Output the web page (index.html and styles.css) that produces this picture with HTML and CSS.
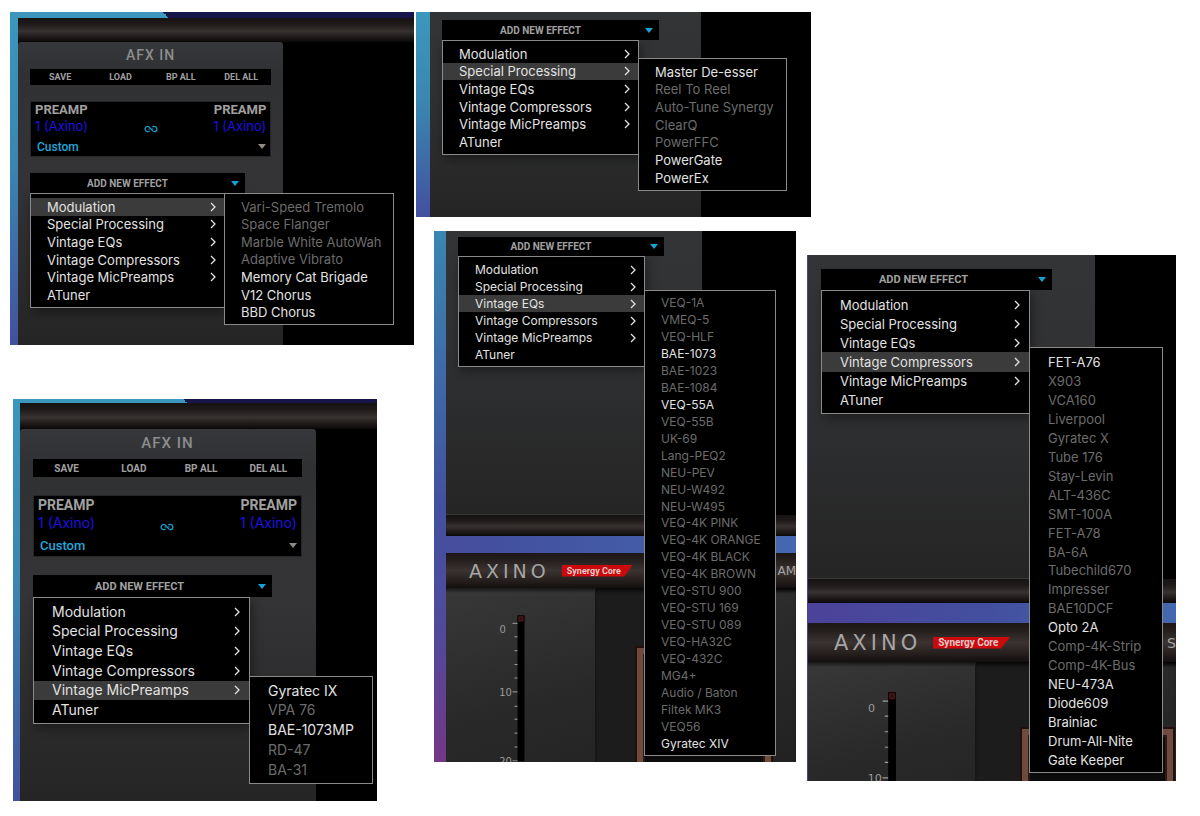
FILE: index.html
```
<!DOCTYPE html>
<html lang="en">
<head>
    <meta charset="UTF-8">
    <meta name="viewport" content="width=device-width, initial-scale=1.0">
    <title>AFX Effects Menu</title>
    <link rel="stylesheet" href="styles.css">
</head>
<body>
    <svg class="defs" width="0" height="0">
        <symbol id="chev" viewBox="0 0 6 10"><path d="M1 1l4 4-4 4" fill="none" stroke="currentColor" stroke-width="1.3"/></symbol>
        <symbol id="arrow" viewBox="0 0 8 5"><path d="M0 0h8L4 5z" fill="currentColor"/></symbol>
        <symbol id="link" viewBox="0 0 14 8">
            <path d="M5.600 5.900C5.200 6.500 4.600 6.700 3.800 6.700a2.700 2.700 0 0 1 0-5.400C6.500 1.300 7.500 6.700 10.200 6.700a2.700 2.700 0 0 0 0-5.400C9.400 1.300 8.800 1.500 8.400 2.100" fill="none" stroke="currentColor" stroke-width="1.300"/>
            <path d="M4.500 4h2M7.500 4h2" stroke="currentColor" stroke-width="1"/>
        </symbol>
        <symbol id="meter" viewBox="0 0 150 174">
            <rect x="72" y="27" width="7" height="147" fill="#000"/>
            <rect x="72" y="27" width="7" height="7" fill="#1a0304"/>
            <rect x="73.500" y="28.500" width="4" height="4" fill="#2c1213" stroke="#5d2327" stroke-width=".7"/>
            <path d="M67 35h5M69 48.500h3M69 62.500h3M69 76.500h3M69 90h3M67 104h5M69 118.500h3M69 131.500h3M69 145.500h3M69 159.500h3M67 173.500h5" stroke="#a0a0a0" stroke-width="1" fill="none"/>
        </symbol>
    </svg>

    <main class="page">
        <div class="col-left">
            <section class="shot shot-mod">
                <div class="window">
                    <div class="bar"></div>
                    <div class="panel rounded">
                        <h2>AFX IN</h2>
                        <div class="tools">
                            <button>SAVE</button><button>LOAD</button><button>BP ALL</button><button>DEL ALL</button>
                        </div>
                        <div class="preamp">
                            <div class="chan">PREAMP<span>1 (Axino)</span></div>
                            <svg class="link"><use href="#link"/></svg>
                            <div class="chan right">PREAMP<span>1 (Axino)</span></div>
                            <label class="preset">
                                <select aria-label="Preset"><option>Custom</option></select>
                                <svg class="arrow"><use href="#arrow"/></svg>
                            </label>
                        </div>
                        <button class="add"><span>ADD NEW EFFECT</span><svg class="arrow"><use href="#arrow"/></svg></button>
                        <ul class="menu">
                            <li class="open"><button>Modulation<svg class="chev"><use href="#chev"/></svg></button>
                                <ul class="submenu">
                                    <li><button disabled>Vari-Speed Tremolo</button></li>
                                    <li><button disabled>Space Flanger</button></li>
                                    <li><button disabled>Marble White AutoWah</button></li>
                                    <li><button disabled>Adaptive Vibrato</button></li>
                                    <li><button>Memory Cat Brigade</button></li>
                                    <li><button>V12 Chorus</button></li>
                                    <li><button>BBD Chorus</button></li>
                                </ul>
                            </li>
                            <li><button>Special Processing<svg class="chev"><use href="#chev"/></svg></button></li>
                            <li><button>Vintage EQs<svg class="chev"><use href="#chev"/></svg></button></li>
                            <li><button>Vintage Compressors<svg class="chev"><use href="#chev"/></svg></button></li>
                            <li><button>Vintage MicPreamps<svg class="chev"><use href="#chev"/></svg></button></li>
                            <li><button>ATuner</button></li>
                        </ul>
                    </div>
                </div>
            </section>

            <section class="shot shot-mic">
                <div class="window">
                    <div class="bar"></div>
                    <div class="panel rounded">
                        <h2>AFX IN</h2>
                        <div class="tools">
                            <button>SAVE</button><button>LOAD</button><button>BP ALL</button><button>DEL ALL</button>
                        </div>
                        <div class="preamp">
                            <div class="chan">PREAMP<span>1 (Axino)</span></div>
                            <svg class="link"><use href="#link"/></svg>
                            <div class="chan right">PREAMP<span>1 (Axino)</span></div>
                            <label class="preset">
                                <select aria-label="Preset"><option>Custom</option></select>
                                <svg class="arrow"><use href="#arrow"/></svg>
                            </label>
                        </div>
                        <button class="add"><span>ADD NEW EFFECT</span><svg class="arrow"><use href="#arrow"/></svg></button>
                        <ul class="menu">
                            <li><button>Modulation<svg class="chev"><use href="#chev"/></svg></button></li>
                            <li><button>Special Processing<svg class="chev"><use href="#chev"/></svg></button></li>
                            <li><button>Vintage EQs<svg class="chev"><use href="#chev"/></svg></button></li>
                            <li><button>Vintage Compressors<svg class="chev"><use href="#chev"/></svg></button></li>
                            <li class="open"><button>Vintage MicPreamps<svg class="chev"><use href="#chev"/></svg></button>
                                <ul class="submenu">
                                    <li><button>Gyratec IX</button></li>
                                    <li><button disabled>VPA 76</button></li>
                                    <li><button>BAE-1073MP</button></li>
                                    <li><button disabled>RD-47</button></li>
                                    <li><button disabled>BA-31</button></li>
                                </ul>
                            </li>
                            <li><button>ATuner</button></li>
                        </ul>
                    </div>
                </div>
            </section>
        </div>

        <div class="col-right">
            <section class="shot shot-special">
                <div class="window">
                    <div class="panel">
                        <button class="add"><span>ADD NEW EFFECT</span><svg class="arrow"><use href="#arrow"/></svg></button>
                        <ul class="menu">
                            <li><button>Modulation<svg class="chev"><use href="#chev"/></svg></button></li>
                            <li class="open"><button>Special Processing<svg class="chev"><use href="#chev"/></svg></button>
                                <ul class="submenu">
                                    <li><button>Master De-esser</button></li>
                                    <li><button disabled>Reel To Reel</button></li>
                                    <li><button disabled>Auto-Tune Synergy</button></li>
                                    <li><button disabled>ClearQ</button></li>
                                    <li><button disabled>PowerFFC</button></li>
                                    <li><button>PowerGate</button></li>
                                    <li><button>PowerEx</button></li>
                                </ul>
                            </li>
                            <li><button>Vintage EQs<svg class="chev"><use href="#chev"/></svg></button></li>
                            <li><button>Vintage Compressors<svg class="chev"><use href="#chev"/></svg></button></li>
                            <li><button>Vintage MicPreamps<svg class="chev"><use href="#chev"/></svg></button></li>
                            <li><button>ATuner</button></li>
                        </ul>
                    </div>
                </div>
            </section>

            <div class="pair">
                <section class="shot shot-eq">
                    <div class="window">
                        <div class="panel">
                            <button class="add"><span>ADD NEW EFFECT</span><svg class="arrow"><use href="#arrow"/></svg></button>
                            <ul class="menu">
                                <li><button>Modulation<svg class="chev"><use href="#chev"/></svg></button></li>
                                <li><button>Special Processing<svg class="chev"><use href="#chev"/></svg></button></li>
                                <li class="open"><button>Vintage EQs<svg class="chev"><use href="#chev"/></svg></button>
                                    <ul class="submenu">
                                        <li><button disabled>VEQ-1A</button></li>
                                        <li><button disabled>VMEQ-5</button></li>
                                        <li><button disabled>VEQ-HLF</button></li>
                                        <li><button>BAE-1073</button></li>
                                        <li><button disabled>BAE-1023</button></li>
                                        <li><button disabled>BAE-1084</button></li>
                                        <li><button>VEQ-55A</button></li>
                                        <li><button disabled>VEQ-55B</button></li>
                                        <li><button disabled>UK-69</button></li>
                                        <li><button disabled>Lang-PEQ2</button></li>
                                        <li><button disabled>NEU-PEV</button></li>
                                        <li><button disabled>NEU-W492</button></li>
                                        <li><button disabled>NEU-W495</button></li>
                                        <li><button disabled>VEQ-4K PINK</button></li>
                                        <li><button disabled>VEQ-4K ORANGE</button></li>
                                        <li><button disabled>VEQ-4K BLACK</button></li>
                                        <li><button disabled>VEQ-4K BROWN</button></li>
                                        <li><button disabled>VEQ-STU 900</button></li>
                                        <li><button disabled>VEQ-STU 169</button></li>
                                        <li><button disabled>VEQ-STU 089</button></li>
                                        <li><button disabled>VEQ-HA32C</button></li>
                                        <li><button disabled>VEQ-432C</button></li>
                                        <li><button disabled>MG4+</button></li>
                                        <li><button disabled>Audio / Baton</button></li>
                                        <li><button disabled>Filtek MK3</button></li>
                                        <li><button disabled>VEQ56</button></li>
                                        <li><button>Gyratec XIV</button></li>
                                    </ul>
                                </li>
                                <li><button>Vintage Compressors<svg class="chev"><use href="#chev"/></svg></button></li>
                                <li><button>Vintage MicPreamps<svg class="chev"><use href="#chev"/></svg></button></li>
                                <li><button>ATuner</button></li>
                            </ul>
                        </div>
                        <div class="bar"></div>
                    </div>
                    <div class="device">
                        <div class="bar head">
                            <span class="logo">AXINO</span><span class="badge">Synergy Core</span><span class="name">AM</span>
                        </div>
                        <div class="body">
                            <svg class="meter" viewBox="0 0 150 174">
                                <use href="#meter"/>
                                <text x="57" y="45">0</text>
                                <text x="60" y="108">10</text>
                                <text x="60" y="178">20</text>
                            </svg>
                            <div class="well"><div class="frame"></div></div>
                        </div>
                    </div>
                </section>

                <section class="shot shot-comp">
                    <div class="window">
                        <div class="panel">
                            <button class="add"><span>ADD NEW EFFECT</span><svg class="arrow"><use href="#arrow"/></svg></button>
                            <ul class="menu">
                                <li><button>Modulation<svg class="chev"><use href="#chev"/></svg></button></li>
                                <li><button>Special Processing<svg class="chev"><use href="#chev"/></svg></button></li>
                                <li><button>Vintage EQs<svg class="chev"><use href="#chev"/></svg></button></li>
                                <li class="open"><button>Vintage Compressors<svg class="chev"><use href="#chev"/></svg></button>
                                    <ul class="submenu">
                                        <li><button>FET-A76</button></li>
                                        <li><button disabled>X903</button></li>
                                        <li><button disabled>VCA160</button></li>
                                        <li><button disabled>Liverpool</button></li>
                                        <li><button disabled>Gyratec X</button></li>
                                        <li><button disabled>Tube 176</button></li>
                                        <li><button disabled>Stay-Levin</button></li>
                                        <li><button disabled>ALT-436C</button></li>
                                        <li><button disabled>SMT-100A</button></li>
                                        <li><button disabled>FET-A78</button></li>
                                        <li><button disabled>BA-6A</button></li>
                                        <li><button disabled>Tubechild670</button></li>
                                        <li><button disabled>Impresser</button></li>
                                        <li><button disabled>BAE10DCF</button></li>
                                        <li><button>Opto 2A</button></li>
                                        <li><button disabled>Comp-4K-Strip</button></li>
                                        <li><button disabled>Comp-4K-Bus</button></li>
                                        <li><button>NEU-473A</button></li>
                                        <li><button>Diode609</button></li>
                                        <li><button>Brainiac</button></li>
                                        <li><button>Drum-All-Nite</button></li>
                                        <li><button>Gate Keeper</button></li>
                                    </ul>
                                </li>
                                <li><button>Vintage MicPreamps<svg class="chev"><use href="#chev"/></svg></button></li>
                                <li><button>ATuner</button></li>
                            </ul>
                        </div>
                        <div class="bar"></div>
                    </div>
                    <div class="device">
                        <div class="bar head">
                            <span class="logo">AXINO</span><span class="badge">Synergy Core</span><span class="name">S</span>
                        </div>
                        <div class="body">
                            <svg class="meter" viewBox="0 0 150 174">
                                <use href="#meter"/>
                                <text x="57" y="45">0</text>
                                <text x="60" y="108">10</text>
                            </svg>
                            <div class="well"><div class="frame"></div></div>
                        </div>
                    </div>
                </section>
            </div>
        </div>
    </main>
</body>
</html>
```
FILE: styles.css
```
* {
    box-sizing: border-box;
}
body {
    margin: 0;
    background: #fff;
    font-family: Roboto, "Liberation Sans", sans-serif;
}
button, select {
    margin: 0;
    padding: 0;
    border: 0;
    background: none;
    font: inherit;
    color: inherit;
    cursor: pointer;
}
ul {
    margin: 0;
    padding: 0;
    list-style: none;
}
.defs {
    position: absolute;
}

/* page columns */
.page {
    display: grid;
    grid-template-columns: 404fr 760fr;
    gap: 2px;
    padding: 12px 24px 15px 10px;
}
.col-left {
    display: flex;
    flex-direction: column;
    gap: 54px;
}
.col-right {
    display: flex;
    flex-direction: column;
    gap: 14px;
}
.pair {
    display: grid;
    grid-template-columns: 362fr 369fr;
    gap: 11px;
    align-items: start;
    margin-left: 18px;
}

/* one plugin window with its desktop behind */
.shot {
    --text: 13px;
    --small: 10px;
    display: flex;
    flex-direction: column;
    background: linear-gradient(#3b97bd, #3a86b0 45%, #43509f);
}
.window {
    display: flex;
    flex-direction: column;
    flex: 1;
    background: #000;
}
.bar {
    flex: none;
    height: 24px;
    background: linear-gradient(#161211, #1e1a19 25%, #383231 55%, #1e1a19 80%, #0b0908);
}
.panel {
    flex: 1;
    padding: 0 12px;
    background: linear-gradient(#333436, #303133 40%, #252525);
}
.rounded {
    border-radius: 3px 3px 0 0;
    background: linear-gradient(#35373a, #303133 10%, #343437 45%, #252525);
}
h2 {
    margin: 0;
    color: #8d8d8d;
    font-weight: 500;
    letter-spacing: 1px;
    text-align: center;
}
.tools {
    display: grid;
    grid-template-columns: repeat(4, 1fr);
    background: #000;
    color: #a0a0a0;
    font-size: var(--tool);
    font-weight: 700;
}
.preamp {
    display: grid;
    grid-template-columns: 1fr auto 1fr;
    background: #000;
    border: 1px solid #262626;
    color: #a0a0a0;
    font-size: var(--text);
    font-weight: 700;
}
.chan span {
    display: block;
    color: #1f0fe0;
    font-family: Inter, sans-serif;
    font-weight: 400;
}
.chan.right {
    text-align: right;
}
.link {
    width: 14px;
    height: 8px;
    align-self: end;
    margin-bottom: 4px;
    color: #1f9ccc;
}
.preset {
    display: flex;
    grid-column: 1 / -1;
    align-items: center;
    padding-left: 2px;
    color: #8f8a83;
}
.preset select {
    flex: 1;
    appearance: none;
    color: #22a7dc;
    font-size: var(--preset);
    font-weight: 500;
}
.arrow {
    flex: none;
    width: 8px;
    height: 5px;
}
.add {
    display: flex;
    align-items: center;
    padding-right: 6px;
    background: #000;
    color: #a0a0a0;
    font-size: var(--small);
    font-weight: 700;
}
.add span {
    flex: 1;
    padding-right: 6px;
    text-align: center;
}
.add .arrow {
    color: #17a0d2;
}

/* menus */
.menu, .submenu {
    display: grid;
    grid-auto-rows: 1fr;
    padding: 4px 0 3px;
    background: #000;
    border: 1px solid #8a8a8a;
    font-family: Inter, "Liberation Sans", sans-serif;
    font-size: var(--text);
}
.menu {
    position: relative;
    z-index: 2;
    box-shadow: 2px 4px 10px rgba(0, 0, 0, 0.4);
}
.menu li {
    position: relative;
    min-height: 0;
}
.menu button {
    display: flex;
    align-items: center;
    justify-content: space-between;
    width: 100%;
    height: 100%;
    padding: 0 8px 0 16px;
    color: #e2e2e2;
    line-height: 16px;
    text-align: left;
    white-space: nowrap;
}
.menu button:hover, .menu .open > button {
    background: #3b3b3b;
}
.menu button:disabled {
    background: none;
    color: #6c6c6c;
    cursor: default;
}
.chev {
    width: 6px;
    height: 10px;
}
.submenu {
    position: absolute;
    top: -5px;
    left: 100%;
}

/* modulation */
.shot-mod {
    --tool: 9px;
    --preset: 12px;
    min-height: 333px;
    padding: 6px 0 0 8px;
    background: linear-gradient(45deg, transparent 50%, #17144a 50%) 150px 0 / 12px 6px no-repeat,
        linear-gradient(#17144a, #17144a) 162px 0 / 100% 6px no-repeat,
        linear-gradient(#3b97bd, #3a86b0 45%, #43509f);
}
.shot-mod .panel {
    width: 67%;
}
.shot-mod h2 {
    padding: 5px 0 6px;
    font-size: 14px;
    line-height: 16px;
}
.shot-mod .tools {
    height: 16px;
}
.shot-mod .preamp {
    height: 56px;
    margin: 16px 0;
    padding: 0 4px;
    line-height: 16px;
}
.shot-mod .add {
    width: 215px;
    height: 20px;
}
.shot-mod .menu {
    width: 195px;
    height: 115px;
}
.shot-mod .submenu {
    width: 170px;
    height: 132px;
}

/* mic preamps */
.shot-mic {
    --text: 14px;
    --small: 11px;
    --tool: 10px;
    --preset: 13px;
    width: 90%;
    min-height: 402px;
    margin-left: 3px;
    padding: 4px 0 0 7px;
    background: linear-gradient(45deg, transparent 50%, #17144a 50%) 168px 0 / 8px 4px no-repeat,
        linear-gradient(#17144a, #17144a) 176px 0 / 100% 4px no-repeat,
        linear-gradient(#3b97bd, #3a86b0 45%, #43509f);
}
.shot-mic .bar {
    height: 26px;
}
.shot-mic .panel {
    width: 83%;
    padding: 0 14px 0 13px;
}
.shot-mic h2 {
    padding: 5px 0 7px;
    font-size: 15px;
    line-height: 18px;
}
.shot-mic .tools {
    height: 18px;
}
.shot-mic .preamp {
    height: 62px;
    margin: 18px 0;
    padding: 1px 4px 0;
    line-height: 17px;
}
.shot-mic .add {
    width: 239px;
    height: 22px;
}
.shot-mic .add span {
    padding-right: 12px;
}
.shot-mic .menu {
    width: 217px;
    height: 127px;
}
.shot-mic .submenu {
    width: 124px;
    height: 108px;
}
.shot-mic .menu button {
    padding: 0 9px 0 18px;
}

/* special processing */
.shot-special {
    width: 52%;
    min-height: 205px;
    padding-left: 14px;
}
.shot-special .panel {
    width: 71%;
    padding-top: 8px;
}
.shot-special .add {
    width: 217px;
    height: 20px;
}
.shot-special .menu {
    width: 197px;
    height: 115px;
}
.shot-special .submenu {
    width: 149px;
    height: 133px;
}

/* vintage eqs */
.shot-eq {
    --text: 12px;
    padding-left: 12px;
    background: linear-gradient(90deg, transparent 12px, #43509f 60px, #4468b0) 0 305px / 100% 18px no-repeat,
        linear-gradient(#3a86b0, #43509f 52%, #504a9c 75%, #743785);
}
.shot-eq .window {
    flex: none;
}
.shot-eq .panel {
    flex: none;
    width: 73%;
    height: 284px;
    padding-top: 6px;
    border-bottom: 1px solid #3a3a3a;
}
.shot-eq .window .bar {
    height: 21px;
}
.shot-eq .add {
    width: 206px;
    height: 19px;
}
.shot-eq .menu {
    width: 187px;
    height: 111px;
}
.shot-eq .submenu {
    width: 132px;
    height: 466px;
}
.device {
    display: flex;
    flex-direction: column;
    margin-top: 17px;
}
.head {
    display: flex;
    align-items: center;
    gap: 12px;
    height: 35px;
    padding-left: 23px;
    background: linear-gradient(#1c1716, #241f1d 20%, #3a3331 50%, #241e1d 80%, #120f0e);
    color: #a5a5a5;
    font-family: "DejaVu Sans", sans-serif;
}
.logo {
    font-size: 19px;
    letter-spacing: 4px;
    line-height: 20px;
}
.badge {
    padding: 0 12px 0 5px;
    background: #cc0a0e;
    clip-path: polygon(0 0, 100% 0, 88% 100%, 0 100%);
    color: #e0caca;
    font-family: Roboto, sans-serif;
    font-size: 9px;
    font-weight: 700;
    line-height: 12px;
    white-space: nowrap;
}
.name {
    margin-left: auto;
    font-size: 12px;
}
.body {
    display: flex;
    height: 174px;
    overflow: hidden;
    background: linear-gradient(rgba(0, 0, 0, 0.6), transparent 5px), linear-gradient(165deg, #383838, #292929 50%, #222);
}
.meter {
    flex: none;
    width: 150px;
    height: 174px;
    border-right: 1px solid #161616;
    fill: #9a9a9a;
    font-family: "DejaVu Sans", sans-serif;
    font-size: 10px;
    text-anchor: middle;
}
.well {
    flex: 1;
    background: linear-gradient(90deg, #1c1c1c 80%, transparent 80%);
    box-shadow: inset 0 5px 5px -3px #000;
}
.frame {
    width: 134px;
    height: 100%;
    margin: 60px 0 0 41px;
    background: #0b0b0b;
    border: 6px solid #6f4a3e;
    outline: 2px solid #22100c;
    box-shadow: inset 0 0 0 2px #2c1814;
}

/* vintage compressors */
.shot-comp {
    --small: 11px;
    margin-top: 24px;
    padding-left: 1px;
    background: linear-gradient(90deg, #4c4299, #43509f 50%, #4468b0);
}
.shot-comp .window {
    flex: none;
}
.shot-comp .panel {
    flex: none;
    width: 78%;
    height: 324px;
    padding: 14px 13px 0;
    border-bottom: 1px solid #3a3a3a;
}
.shot-comp .add {
    width: 231px;
    height: 21px;
}
.shot-comp .add span {
    padding-right: 12px;
}
.shot-comp .menu {
    width: 209px;
    height: 124px;
}
.shot-comp .submenu {
    width: 134px;
    height: 426px;
}
.shot-comp .menu button {
    padding: 0 9px 0 18px;
}
.shot-comp .device {
    margin-top: 20px;
}
.shot-comp .head {
    height: 39px;
    padding-left: 26px;
}
.shot-comp .logo {
    font-size: 21px;
}
.shot-comp .badge {
    font-size: 10px;
}
.shot-comp .name {
    font-size: 14px;
}
.shot-comp .body {
    height: 119px;
}
.shot-comp .meter {
    width: 168px;
    height: 194px;
}
.shot-comp .frame {
    width: 151px;
    margin: 67px 0 0 46px;
}
```
